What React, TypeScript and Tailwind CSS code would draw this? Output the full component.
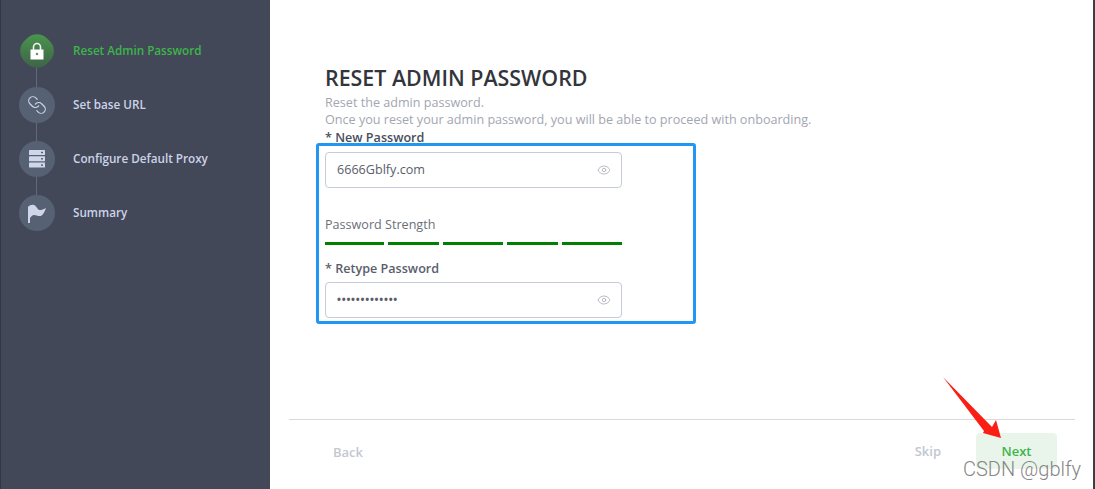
import { Eye, Link } from 'lucide-react';
import type { ReactNode } from 'react';

function LockIcon() {
    return (
        <svg width="14" height="18" viewBox="0 0 14 18">
            <path d="M3.5 8V5a3.5 3.5 0 0 1 7 0v3" fill="none" stroke="#f4f6ee" strokeWidth="1.6" />
            <rect x="0.5" y="7.5" width="13" height="10" fill="#ffffff" />
            <circle cx="7" cy="12" r="1.2" fill="#5f8f55" />
        </svg>
    );
}

function ServerIcon() {
    return (
        <svg width="16" height="18" viewBox="0 0 16 18">
            {[0, 6.3, 12.6].map((y) => (
                <g key={y}>
                    <rect x="0" y={y} width="16" height="5" rx="0.6" fill="#cfd6ea" />
                    <rect x="12" y={y + 1.8} width="2" height="1.4" fill="#56606f" />
                </g>
            ))}
        </svg>
    );
}

function FlagIcon() {
    return (
        <svg width="18" height="19" viewBox="0 0 18 19">
            <path
                d="M0 3C1.500 1 4 .500 6 1c2 .500 3 4 5 5 2.500.500 5-1 7-2-1 3-2.500 6.500-5 8-2.500.500-5-1-7-1-1.500 0-3 1.500-4 3v5H0z"
                fill="#cfd6ea"
            />
        </svg>
    );
}

function Step({ icon, label, active }: { icon: ReactNode; label: string; active?: boolean }) {
    return (
        <div className="flex h-[54px] items-center">
            {active ? (
                <div className="mx-[2px] flex h-[32px] w-[32px] rotate-45 items-center justify-center rounded-[14px] bg-gradient-to-br from-[#4a9e4c] to-[#3c5a46]">
                    <div className="flex -rotate-45">{icon}</div>
                </div>
            ) : (
                <div className="flex h-[36px] w-[36px] items-center justify-center rounded-full bg-[#566173]">
                    {icon}
                </div>
            )}
            <span
                className={`ml-[18px] text-[11.7px] font-semibold ${
                    active ? 'text-[#3cb54a]' : 'text-[#ccd3e8]'
                }`}
            >
                {label}
            </span>
        </div>
    );
}

function PasswordInput({ value, dots }: { value: string; dots?: boolean }) {
    return (
        <div className="flex h-[36px] w-[297px] items-center justify-between rounded-[4px] border border-[#c5cbdc] bg-white pl-[11px] pr-[10px]">
            <span className={`text-[#5a5e6b] ${dots ? 'text-[10.500px] font-bold tracking-[0.75px]' : 'text-[12.600px]'}`}>
                {value}
            </span>
            <Eye size={14} strokeWidth={1.4} className="text-[#a9adb5]" />
        </div>
    );
}

export default function App() {
    const bars = ['w-[59px]', 'w-[51px]', 'w-[60px]', 'w-[51px]', 'w-[60px]'];

    return (
        <div className="relative flex h-[489px] w-[1095px] overflow-hidden bg-white font-['Open_Sans',sans-serif]">
            {/* sidebar */}
            <div className="w-[270px] shrink-0 border-l border-[#34373f] bg-[#424858] pl-[18px] pt-[24px]">
                <div className="relative">
                    <div className="absolute left-[17px] top-[40px] h-[150px] w-px bg-[#5f6a7b]" />
                    <div className="relative">
                        <Step active icon={<LockIcon />} label="Reset Admin Password" />
                        <Step
                            icon={<Link size={20} strokeWidth={1.4} className="-scale-x-100 text-[#cfd6ea]" />}
                            label="Set base URL"
                        />
                        <Step icon={<ServerIcon />} label="Configure Default Proxy" />
                        <Step icon={<FlagIcon />} label="Summary" />
                    </div>
                </div>
            </div>

            {/* main */}
            <div className="flex flex-1 flex-col border-r-2 border-[#3f3f3f] pl-[19px] pr-[18px]">
                <div className="h-[419px] pl-[36px] pt-[61px]">
                    <h1 className="text-[21.400px] leading-[33px] font-semibold text-[#33353c]">RESET ADMIN PASSWORD</h1>
                    <p className="text-[12.600px] leading-[17px] text-[#a3a6b1]">Reset the admin password.</p>
                    <p className="text-[12.600px] leading-[17px] text-[#a3a6b1]">
                        Once you reset your admin password, you will be able to proceed with onboarding.
                    </p>
                    <p className="mb-[6px] mt-[2px] text-[12.600px] leading-[16px] font-semibold text-[#4a4e5a]">
                        * New Password
                    </p>
                    <PasswordInput value="6666Gblfy.com" />
                    <p className="mt-[28px] text-[12.600px] leading-[18px] text-[#6b6f7a]">Password Strength</p>
                    <div className="mt-[8px] flex gap-[4px]">
                        {bars.map((w, i) => (
                            <div key={i} className={`h-[3px] bg-[#008000] ${w}`} />
                        ))}
                    </div>
                    <p className="mb-[4px] mt-[15px] text-[12.600px] leading-[18px] font-semibold text-[#5a5e6b]">
                        * Retype Password
                    </p>
                    <PasswordInput value="•••••••••••••" dots />
                </div>
                <div className="flex h-[70px] items-start border-t border-[#d9d9d9] pl-[44px] pr-[18px] pt-[13px]">
                    <span className="mt-[10px] text-[13px] font-semibold text-[#c3c7d2]">Back</span>
                    <span className="ml-auto mt-[9px] text-[13px] font-semibold text-[#c3c7d2]">Skip</span>
                    <div className="ml-[35px] flex h-[36px] w-[81px] items-center justify-center rounded-[4px] bg-[#e9f5ea] pt-[2px] text-[13px] font-semibold text-[#3cb54a]">
                        Next
                    </div>
                </div>
            </div>

            {/* screenshot annotations */}
            <div className="absolute left-[316px] top-[143px] h-[181px] w-[380px] rounded-[3px] border-[3px] border-[#2196f3]" />
            <svg className="absolute left-[940px] top-[374px]" width="70" height="66" viewBox="0 0 70 66">
                <path d="M3 3 L52 53 L56 46 L61 64 L43 59 L44 57 Z" fill="#fa1e14" />
            </svg>
            <span className="absolute left-[963px] top-[458px] font-['Roboto',sans-serif] text-[20px] leading-[22px] font-light text-[#858585]">
                CSDN @gblfy
            </span>
        </div>
    );
}
